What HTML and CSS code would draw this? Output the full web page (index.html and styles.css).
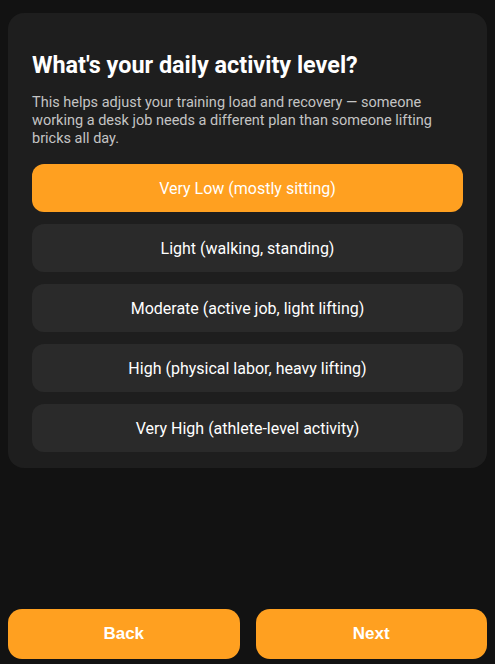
FILE: index.html
```html
<!DOCTYPE html>
<html>
<head>
<meta charset="utf-8">
<link rel="stylesheet" href="styles.css">
</head>
<body>
<div class="page">
  <div class="card">
    <h2 class="title">What's your daily activity level?</h2>
    <p class="desc">This helps adjust your training load and recovery — someone working a desk job needs a different plan than someone lifting bricks all day.</p>
    <div class="options">
      <button class="option selected">Very Low (mostly sitting)</button>
      <button class="option">Light (walking, standing)</button>
      <button class="option">Moderate (active job, light lifting)</button>
      <button class="option">High (physical labor, heavy lifting)</button>
      <button class="option">Very High (athlete-level activity)</button>
    </div>
  </div>
  <div class="nav">
    <button class="navbtn">Back</button>
    <button class="navbtn">Next</button>
  </div>
</div>
</body>
</html>
```
FILE: styles.css
```css
* { box-sizing: border-box; }
html, body { margin: 0; padding: 0; background: #121212; height: 100%; }
body { font-family: Roboto, "Noto Sans", sans-serif; color: #fff; }
.page {
  display: flex;
  flex-direction: column;
  height: 100%;
  padding: 13px 8px 5px;
}
.card {
  background: #1e1e1e;
  border-radius: 16px;
  padding: 38px 24px 16px;
}
.title {
  margin: 0;
  font-size: 23.4px;
  font-weight: 700;
  line-height: 28px;
  color: #fff;
}
.desc {
  margin: 15px 0 16px;
  font-size: 14.5px;
  line-height: 18px;
  color: #c4c4c4;
}
.options { display: flex; flex-direction: column; gap: 12px; }
.option {
  height: 48px;
  border: none;
  border-radius: 12px;
  background: #2a2a2a;
  color: #fff;
  font-family: Roboto, "Noto Sans", sans-serif;
  font-size: 16px;
  padding: 0;
}
.option.selected { background: #ffa020; }
.nav {
  margin-top: auto;
  display: flex;
  gap: 16px;
}
.navbtn {
  flex: 1;
  height: 50px;
  border: none;
  border-radius: 14px;
  background: #ffa020;
  color: #fff;
  font-family: "Liberation Sans", Arial, sans-serif;
  font-weight: 700;
  font-size: 17px;
}
```
